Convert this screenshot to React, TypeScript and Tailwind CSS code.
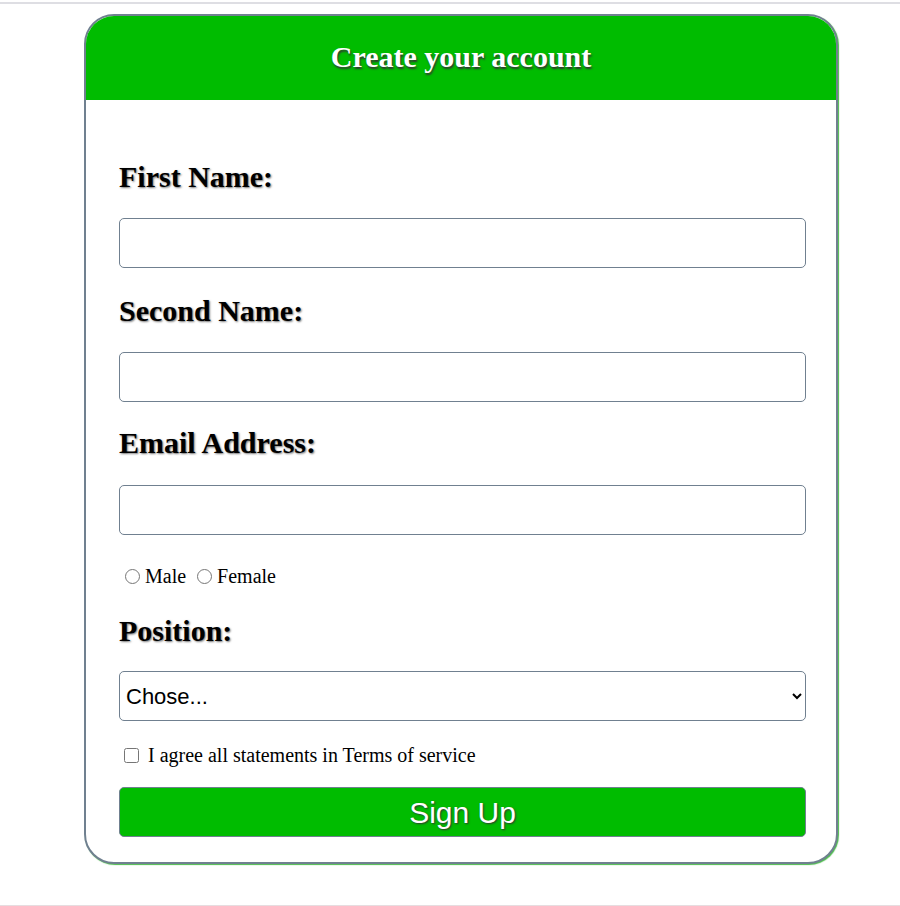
export default function App() {
  const label =
    "block font-['Liberation_Serif',serif] font-bold text-[30px] leading-[34px] text-black [text-shadow:1px_1px_2px_#777]";
  const field =
    "block w-full h-[50px] rounded-[5px] border border-[#708090] bg-white px-2 outline-none";

  return (
    <div className="min-h-[906px] bg-white flex flex-col">
      {/* bandeau du haut */}
      <div className="mt-[2px] h-[2px] bg-[#dedee3]"></div>

      <div className="flex-1 flex justify-center pt-[10px]">
        <div className="w-[754px] h-[850px] ml-[22px] rounded-[30px] border-2 border-[#708090] overflow-hidden bg-white shadow-[1px_1px_1px_#4cbb4c]">
          {/* ENTETE */}
          <div className="h-[84px] pb-[3px] bg-[#00bc00] flex items-center justify-center">
            <h1 className="font-['Liberation_Serif',serif] font-bold text-[30px] text-white [text-shadow:1px_2px_2px_#333]">
              Create your account
            </h1>
          </div>

          {/* FORMULAIRE */}
          <form className="pl-[33px] pr-[30px] pt-[60px]">
            <label className={label}>First Name:</label>
            <input type="text" className={`${field} mt-6`} />

            <label className={`${label} mt-[26px]`}>Second Name:</label>
            <input type="text" className={`${field} mt-6`} />

            <label className={`${label} mt-6`}>Email Address:</label>
            <input type="email" className={`${field} mt-[25px]`} />

            <div className="mt-[29px] h-6 flex items-center font-['Liberation_Serif',serif] text-[20px] text-black">
              <input type="radio" name="gender" className="ml-[6px] mr-[5px] w-[15px] h-[15px]" />
              <span>Male</span>
              <input type="radio" name="gender" className="ml-[11px] mr-[5px] w-[15px] h-[15px]" />
              <span>Female</span>
            </div>

            <label className={`${label} mt-[26px]`}>Position:</label>
            <select className={`${field} mt-[23px] pl-[2px] pr-[6px] font-['Liberation_Sans',Arial,sans-serif] text-[22px] text-black`}>
              <option>Chose...</option>
              <option>Student</option>
              <option>Teacher</option>
              <option>Other</option>
            </select>

            <div className="mt-[22px] h-6 flex items-center font-['Liberation_Serif',serif] text-[20px] text-black">
              <input type="checkbox" className="ml-[5px] mr-[9px] w-[15px] h-[15px]" />
              <span>I agree all statements in Terms of service</span>
            </div>

            <button
              type="button"
              className="mt-5 w-full h-[50px] rounded-[5px] border border-[#708090] bg-[#00bc00] font-['Liberation_Sans',Arial,sans-serif] text-[30px] text-white [text-shadow:1px_1px_2px_#333]"
            >
              Sign Up
            </button>
          </form>
        </div>
      </div>

      <div className="h-px bg-[#e6dde0]"></div>
    </div>
  );
}
